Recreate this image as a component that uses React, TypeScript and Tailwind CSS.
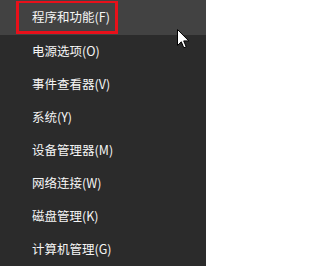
const items = [
  "程序和功能(F)",
  "电源选项(O)",
  "事件查看器(V)",
  "系统(Y)",
  "设备管理器(M)",
  "网络连接(W)",
  "磁盘管理(K)",
  "计算机管理(G)",
];

export default function App() {
  return (
    <div
      className="relative h-[266px] w-[206px] overflow-hidden bg-[#2b2b2b] text-[12.5px] text-[#f5f5f5]"
      style={{ fontFamily: '"Noto Sans CJK SC", "Noto Sans", sans-serif' }}
    >
      <ul>
        {items.map((label, i) => (
          <li
            key={label}
            className={
              "flex items-center pl-[32px] " +
              (i === 0 ? "h-[35px] bg-[#424242]" : "h-[33px]")
            }
          >
            {label}
          </li>
        ))}
      </ul>

      {/* red highlight box around first item */}
      <div className="absolute left-[16px] top-[1px] h-[33px] w-[102px] border-[3px] border-t-2 border-[#e8101a]" />

      {/* mouse pointer */}
      <svg
        className="absolute left-[177px] top-[29px]"
        width="13"
        height="20"
        viewBox="0 0 13 20"
      >
        <path
          d="M0.5 0.5 L0.5 16.5 L4.3 12.8 L6.8 18.8 L9.2 17.8 L6.7 11.9 L11.8 11.9 Z"
          fill="#fff"
          stroke="#000"
          strokeWidth="1"
        />
      </svg>
    </div>
  );
}
